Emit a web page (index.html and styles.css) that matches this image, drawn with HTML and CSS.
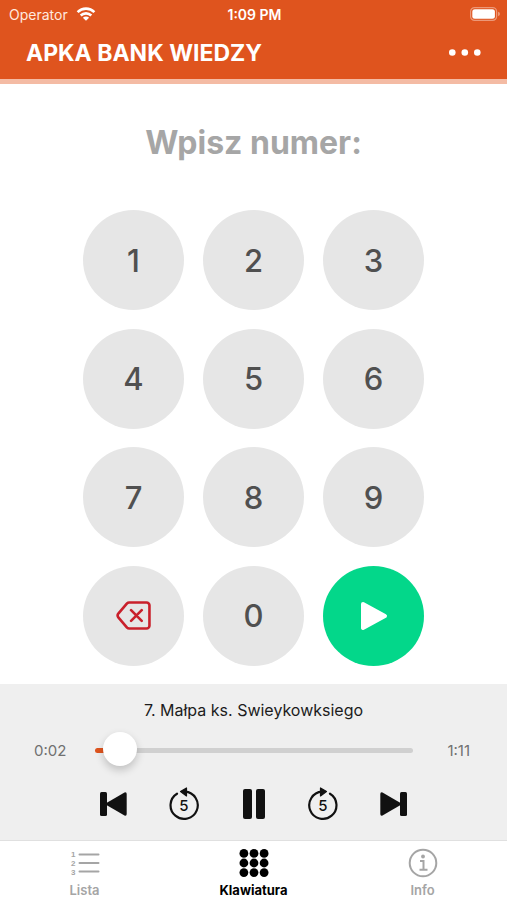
FILE: index.html
```html
<!DOCTYPE html>
<html lang="pl">
<head>
<meta charset="utf-8">
<meta name="viewport" content="width=device-width, initial-scale=1">
<title>Apka Bank Wiedzy</title>
<link rel="stylesheet" href="styles.css">
</head>
<body>
<div class="app">
  <header class="header">
    <div class="status">
      <div class="carrier">
        <span>Operator</span>
        <svg width="20" height="14" viewBox="0 0 20 14" fill="none" stroke="#fff" stroke-width="2.6" aria-hidden="true">
          <path d="M1.600 5.100a12 12 0 0 1 16.800 0M4.700 8.500a7.600 7.600 0 0 1 10.600 0"/>
          <path d="M10 13.800 6.900 10.700a4.400 4.400 0 0 1 6.200 0z" fill="#fff" stroke="none"/>
        </svg>
      </div>
      <span class="clock">1:09 PM</span>
      <svg class="battery" width="30" height="14" viewBox="0 0 30 14" aria-hidden="true">
        <rect x=".6" y=".6" width="26" height="12.800" rx="4" fill="none" stroke="#fff" stroke-opacity=".4" stroke-width="1.200"/>
        <rect x="2.300" y="2.300" width="22.600" height="9.400" rx="2.500" fill="#fff"/>
        <path d="M28 4.800q2 .6 2 2.200t-2 2.200z" fill="#fff" fill-opacity=".4"/>
      </svg>
    </div>
    <div class="titlebar">
      <h1>APKA BANK WIEDZY</h1>
      <button class="more" type="button" aria-label="Menu">
        <svg width="32" height="8" viewBox="0 0 32 8" fill="#fff"><circle cx="3.300" cy="3.500" r="3.300"/><circle cx="15.800" cy="3.500" r="3.300"/><circle cx="28.300" cy="3.500" r="3.300"/></svg>
      </button>
    </div>
  </header>

  <main class="main">
    <h2>Wpisz numer:</h2>
    <div class="keypad">
      <button class="key" type="button">1</button>
      <button class="key" type="button">2</button>
      <button class="key" type="button">3</button>
      <button class="key" type="button">4</button>
      <button class="key" type="button">5</button>
      <button class="key" type="button">6</button>
      <button class="key" type="button">7</button>
      <button class="key" type="button">8</button>
      <button class="key" type="button">9</button>
      <button class="key" type="button" aria-label="Usuń">
        <svg width="35" height="29" viewBox="0 0 36 30" fill="none" stroke="#c9202b" stroke-width="2.700" stroke-linecap="round" stroke-linejoin="round">
          <path d="M13.500 1.500H31.500a3 3 0 0 1 3 3V25.500a3 3 0 0 1-3 3H13.500q-1.300 0-2.200-.9L2.300 17q-1.500-2 0-4L11.300 2.400q.9-.9 2.200-.9zM15.500 9.500l11 11M26.500 9.500l-11 11"/>
        </svg>
      </button>
      <button class="key" type="button">0</button>
      <button class="key key-play" type="button" aria-label="Odtwórz">
        <svg width="28" height="30" viewBox="0 0 28 30" fill="#fff" stroke="#fff" stroke-width="4" stroke-linejoin="round"><path d="M3 3 25 15 3 27z"/></svg>
      </button>
    </div>
  </main>

  <section class="player">
    <label class="track-name" for="seek">7. Małpa ks. Swieykowksiego</label>
    <div class="progress">
      <span class="time">0:02</span>
      <input class="seek" id="seek" type="range" min="0" max="71" value="2">
      <span class="time time-end">1:11</span>
    </div>
    <div class="controls">
      <button type="button" aria-label="Poprzedni">
        <svg width="28" height="26" viewBox="0 0 28 26" fill="#111"><rect x="1" y="1" width="7" height="24" rx="1.500"/><path d="M7 12.200 25.500 1.500Q27.700 .8 27.700 3V23Q27.700 25.200 25.500 24.500L7 13.800z"/></svg>
      </button>
      <button type="button" aria-label="Cofnij 5 sekund">
        <svg width="32" height="34" viewBox="0 0 32 34"><path d="M9 6.700A13.600 13.600 0 1 0 17 4.700" fill="none" stroke="#111" stroke-width="2.200" stroke-linecap="round"/><path d="M18.500 1V9L12.500 4.600z" fill="#111" stroke="#111" stroke-width="1.200" stroke-linejoin="round"/><text class="skip" x="16" y="24" text-anchor="middle">5</text></svg>
      </button>
      <button type="button" aria-label="Pauza">
        <svg width="24" height="30" viewBox="0 0 24 30" fill="#111"><rect x="1" y="0" width="9" height="30" rx="2"/><rect x="14" y="0" width="9" height="30" rx="2"/></svg>
      </button>
      <button type="button" aria-label="Do przodu 5 sekund">
        <svg width="32" height="34" viewBox="0 0 32 34"><path d="M23 6.700A13.600 13.600 0 1 1 15 4.700" fill="none" stroke="#111" stroke-width="2.200" stroke-linecap="round"/><path d="M13.500 1V9L19.500 4.600z" fill="#111" stroke="#111" stroke-width="1.200" stroke-linejoin="round"/><text class="skip" x="16" y="24" text-anchor="middle">5</text></svg>
      </button>
      <button type="button" aria-label="Następny">
        <svg width="28" height="26" viewBox="0 0 28 26" fill="#111"><rect x="20" y="1" width="7" height="24" rx="1.500"/><path d="M21 12.200 2.500 1.500Q.3 .8 .3 3V23Q.3 25.200 2.500 24.500L21 13.800z"/></svg>
      </button>
    </div>
  </section>

  <nav class="tabs">
    <a href="#lista">
      <svg width="30" height="30" viewBox="0 0 30 30"><path d="M9.500 6.500H28.500M9.500 15H28.500M9.500 23.500H28.500" stroke="#a5a5a5" stroke-width="2" stroke-linecap="round"/><g class="list-number"><text x="1" y="9">1</text><text x="1" y="18">2</text><text x="1" y="27">3</text></g></svg>
      <span>Lista</span>
    </a>
    <a class="active" href="#klawiatura" aria-current="page">
      <svg width="30" height="30" viewBox="0 0 30 30" fill="#000"><circle cx="4.900" cy="5.400" r="4.400"/><circle cx="15" cy="5.400" r="4.400"/><circle cx="25.100" cy="5.400" r="4.400"/><circle cx="4.900" cy="15" r="4.400"/><circle cx="15" cy="15" r="4.400"/><circle cx="25.100" cy="15" r="4.400"/><circle cx="4.900" cy="24.600" r="4.400"/><circle cx="15" cy="24.600" r="4.400"/><circle cx="25.100" cy="24.600" r="4.400"/></svg>
      <span>Klawiatura</span>
    </a>
    <a href="#info">
      <svg width="30" height="30" viewBox="0 0 30 30" fill="none" stroke="#a5a5a5" stroke-width="2"><circle cx="15" cy="15" r="13.300"/><path d="M12 13H15.500V21.500M11.500 21.800H19.500"/><circle cx="15" cy="8.500" r="1.900" fill="#a5a5a5" stroke="none"/></svg>
      <span>Info</span>
    </a>
  </nav>
</div>
</body>
</html>
```
FILE: styles.css
```css
* { box-sizing: border-box; }

body {
  margin: 0;
  font-family: Inter, "Liberation Sans", sans-serif;
  background: #fff;
}

button {
  padding: 0;
  border: 0;
  background: none;
  font: inherit;
  color: inherit;
  cursor: pointer;
}

svg { display: block; }

.app {
  display: flex;
  flex-direction: column;
  min-height: 100vh;
}

.header {
  background: #df541e;
  color: #fff;
  border-bottom: 5px solid #f4bba4;
}

.status {
  display: grid;
  grid-template-columns: 1fr auto 1fr;
  align-items: center;
  height: 28px;
  padding: 0 7px 0 9px;
  font-size: 14px;
}

.carrier {
  display: flex;
  align-items: center;
  gap: 8px;
  color: #ffe9df;
}

.clock { font-weight: 600; }

.battery { justify-self: end; }

.titlebar {
  display: flex;
  align-items: center;
  justify-content: space-between;
  height: 51px;
  padding: 0 26px 2px;
}

h1 {
  margin: 0;
  font-size: 23px;
  line-height: 32px;
  font-weight: 700;
}

.main {
  flex: 1;
  display: flex;
  flex-direction: column;
  align-items: center;
  padding: 37px 16px 18px;
}

h2 {
  margin: 0 0 45px;
  font-size: 32px;
  line-height: 44px;
  font-weight: 700;
  color: #a6a6a6;
}

.keypad {
  flex: 1;
  display: grid;
  grid-template-columns: repeat(3, 101px);
  grid-auto-rows: 100px;
  column-gap: 19px;
  row-gap: 16px;
  align-content: space-between;
}

.key {
  display: flex;
  align-items: center;
  justify-content: center;
  border-radius: 50%;
  background: #e6e6e6;
  color: #505050;
  font-size: 31px;
  font-weight: 500;
}

.key-play { background: #03d78a; }

.player {
  display: flex;
  flex-direction: column;
  height: 156px;
  padding-top: 16px;
  background: #efefef;
}

.track-name {
  font-size: 16px;
  line-height: 20px;
  text-align: center;
  color: #1c1c1c;
}

.progress {
  display: grid;
  grid-template-columns: 61px 1fr 57px;
  align-items: center;
  height: 36px;
  margin: 12px 37px 0 34px;
}

.time {
  font-size: 15px;
  color: #707070;
}

.time-end { text-align: right; }

.seek {
  appearance: none;
  width: 100%;
  height: 34px;
  margin: 0;
  background: transparent;
}

.seek::-webkit-slider-runnable-track {
  height: 5px;
  border-radius: 3px;
  background: linear-gradient(to right, #df541e 24px, #d0d0d0 24px);
}

.seek::-webkit-slider-thumb {
  appearance: none;
  width: 34px;
  height: 34px;
  margin-top: -16px;
  border-radius: 50%;
  background: #fff;
  box-shadow: 0 4px 8px rgba(0, 0, 0, 0.2);
}

.controls {
  display: flex;
  align-items: center;
  justify-content: space-between;
  height: 40px;
  margin: 16px 99px 0;
}

.skip {
  font-size: 15px;
  font-weight: 500;
  fill: #111;
}

.tabs {
  display: grid;
  grid-template-columns: repeat(3, 1fr);
  height: 60px;
  border-top: 1px solid #e0e0e0;
  background: #fff;
}

.tabs a {
  display: flex;
  flex-direction: column;
  align-items: center;
  gap: 4px;
  padding-top: 7px;
  font-size: 13px;
  line-height: 16px;
  font-weight: 600;
  color: #a5a5a5;
  text-decoration: none;
}

.tabs .active {
  color: #000;
  font-weight: 700;
}

.list-number {
  font-family: "Liberation Sans", sans-serif;
  font-size: 8px;
  font-weight: 700;
  fill: #a5a5a5;
}
```
